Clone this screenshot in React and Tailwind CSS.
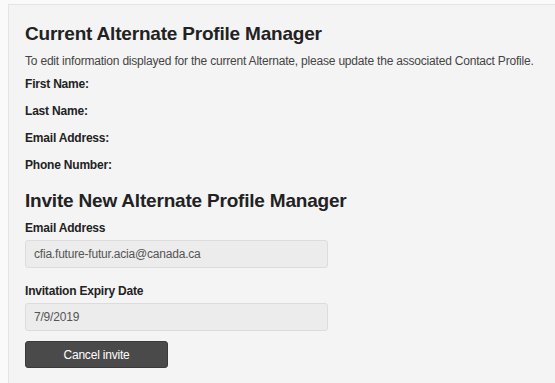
import React from 'react'

const labels = ['First Name:', 'Last Name:', 'Email Address:', 'Phone Number:']

export default function App() {
  return (
    <div className="h-[383px] w-[555px] overflow-hidden bg-[#fafafa] pl-2 pt-[4px] font-['Liberation_Sans',Arial,sans-serif] text-[#333]">
      <div className="h-full border-l border-t border-[#e4e4e4] bg-[#f4f4f4] pl-4 pt-[17px]">
        {/* Current alternate */}
        <h2 className="text-[19px] font-bold leading-[24px] tracking-[-0.2px] text-[#222]">Current Alternate Profile Manager</h2>
        <p className="mt-[7px] text-[12px] leading-[16px] tracking-[-0.2px] text-[#444]">
          To edit information displayed for the current Alternate, please update the associated Contact Profile.
        </p>
        <div className="mt-[4px] flex flex-col">
          {labels.map((l) => (
            <div key={l} className="h-[27px] pt-[3px] text-[12px] font-bold leading-[16px] tracking-[-0.2px] text-[#222]">
              {l}
            </div>
          ))}
        </div>

        {/* Invite */}
        <h2 className="mt-[8px] text-[19px] font-bold leading-[24px] tracking-[-0.2px] text-[#222]">Invite New Alternate Profile Manager</h2>
        <div className="mt-[7px] text-[12px] font-bold leading-[16px] tracking-[-0.2px] text-[#222]">Email Address</div>
        <div className="mt-[4px] flex h-[28px] w-[303px] items-center rounded-[3px] border border-[#dcdcdc] bg-[#ececec] px-2 text-[12px] tracking-[-0.2px] text-[#555]">
          cfia.future-futur.acia@canada.ca
        </div>
        <div className="mt-[15px] text-[12px] font-bold leading-[16px] tracking-[-0.2px] text-[#222]">Invitation Expiry Date</div>
        <div className="mt-[4px] flex h-[28px] w-[303px] items-center rounded-[3px] border border-[#dcdcdc] bg-[#ececec] px-2 text-[12px] tracking-[-0.2px] text-[#555]">
          7/9/2019
        </div>
        <button className="mt-[10px] flex h-[27px] w-[143px] items-center justify-center rounded-[3px] border border-[#3a3a3a] bg-[#4a4a4a] text-[12px] tracking-[-0.2px] text-white">
          Cancel invite
        </button>
      </div>
    </div>
  )
}
